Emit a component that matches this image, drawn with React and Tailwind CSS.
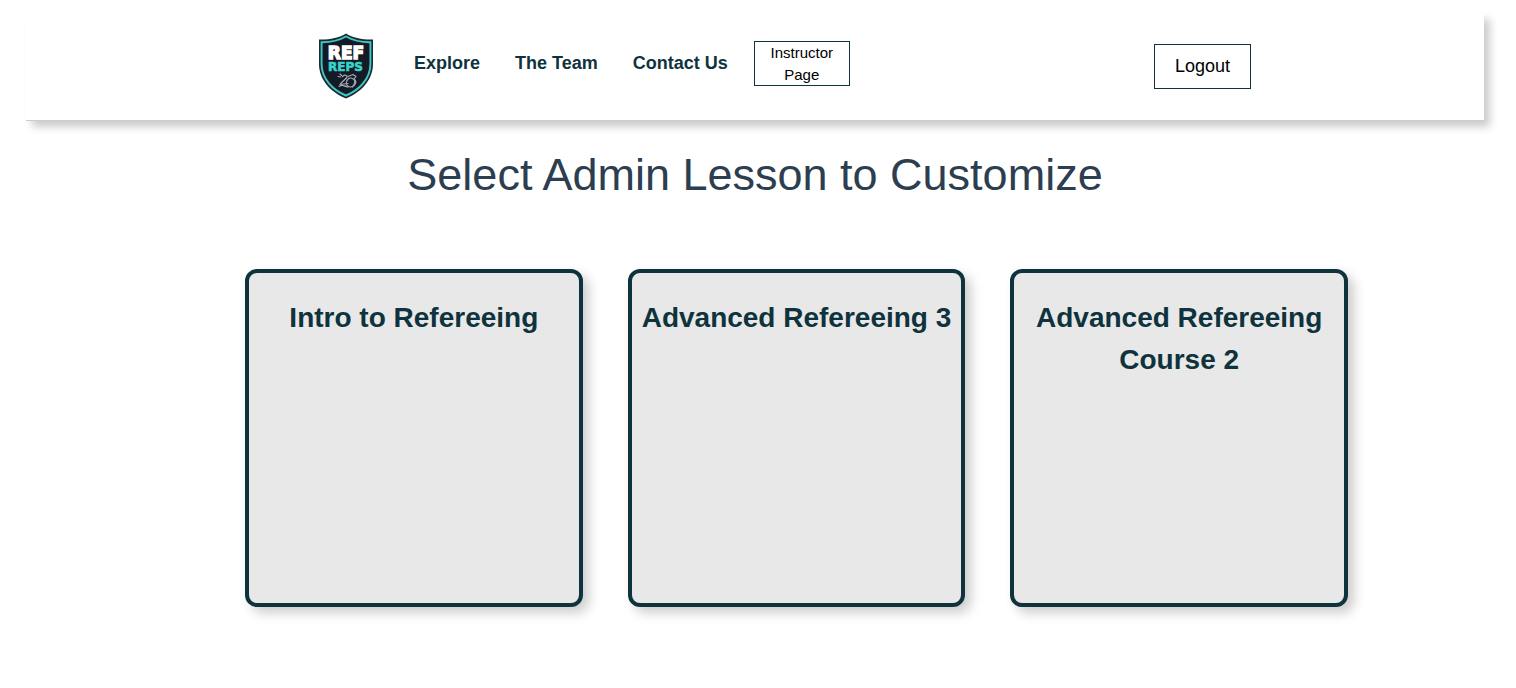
const navLinks = ["Explore", "The Team", "Contact Us"];
const lessons = ["Intro to Refereeing", "Advanced Refereeing 3", "Advanced Refereeing Course 2"];

function Logo() {
  return (
    <svg viewBox="0 0 56 66" className="h-[66px] w-14" role="img" aria-label="Ref Reps">
      <path d="M28 0.5C21 5 10 7 1 6.5V31C1 47 13 59.500 28 65.500C43 59.500 55 47 55 31V6.500C46 7 35 5 28 0.500Z" fill="#1b2a36" />
      <path d="M28 3.500C20.500 7.800 12 9.300 3.600 9.200V31C3.600 45.500 14.500 57 28 62.500C41.500 57 52.400 45.500 52.400 31V9.200C44 9.300 35.500 7.800 28 3.500Z" fill="#151a27" stroke="#3cc9c1" strokeWidth="1.900" />
      <text x="28" y="25.500" textAnchor="middle" fontFamily="DejaVu Sans, sans-serif" fontWeight="700" fontSize="17" fill="#fff" stroke="#fff" strokeWidth="1.400">REF</text>
      <text x="27.500" y="37.800" textAnchor="middle" fontFamily="DejaVu Sans, sans-serif" fontWeight="700" fontSize="12" fill="#35d6cb" stroke="#35d6cb" strokeWidth="0.600">REPS</text>
      <g fill="none" stroke="#a4a9b2" strokeWidth="1.200" strokeLinecap="round" strokeLinejoin="round">
        <path d="M20 43.500l2.500 0.500M22 41l1.500 1.500" />
        <path d="M24.500 43.500c2-2 5-1.500 4.500 0.500c-0.500 2-4 3.500-7 7.500l8-1" />
        <path d="M21 53.500c4-3 6 0.500 9 0.500" />
        <ellipse cx="32.500" cy="49.500" rx="4" ry="4.500" transform="rotate(25 32.500 49.500)" />
        <path d="M30 43.500l5-2 3 2-2 2.500c3 2 2 6-1.500 8" />
      </g>
    </svg>
  );
}

export default function App() {
  return (
    <div className="pt-[13px] pr-8 pb-20 pl-[26px] font-['Liberation_Sans',Arial,sans-serif] text-[#0f333d]">
      <header className="flex h-[108px] items-start border-b border-[#cccccc] bg-white pt-5 pr-[233px] pl-[292px] shadow-[6px_6px_8px_rgba(0,0,0,0.2)]">
        <a href="#home"><Logo /></a>
        <nav className="ml-10 flex gap-[35px] pt-4 text-lg leading-7 font-bold whitespace-nowrap">
          {navLinks.map((label) => (
            <a key={label} href="#">{label}</a>
          ))}
        </nav>
        <button className="mt-2 ml-[26px] h-[45px] w-24 shrink-0 border border-[#0f333d] px-2 pb-[2px] text-[15px] leading-[22px] text-black">
          Instructor Page
        </button>
        <button className="mt-[11px] ml-auto h-[45px] w-[97px] shrink-0 border border-[#0f333d] pb-[2px] text-lg leading-6 text-black">
          Logout
        </button>
      </header>
      <main>
        <h1 className="mt-5 text-center text-[45px] leading-[68px] text-[#2c3e50]">
          Select Admin Lesson to Customize
        </h1>
        <div className="mt-[60px] grid grid-cols-3 gap-[45px] pr-[136px] pl-[219px]">
          {lessons.map((title) => (
            <a
              key={title}
              href="#"
              className="aspect-square rounded-xl border-4 border-[#0f333d] bg-[#e8e8e8] px-1 pt-6 text-center text-[28px] leading-[42px] font-bold shadow-[6px_6px_12px_rgba(0,0,0,0.2)]"
            >
              <h2>{title}</h2>
            </a>
          ))}
        </div>
      </main>
    </div>
  );
}
